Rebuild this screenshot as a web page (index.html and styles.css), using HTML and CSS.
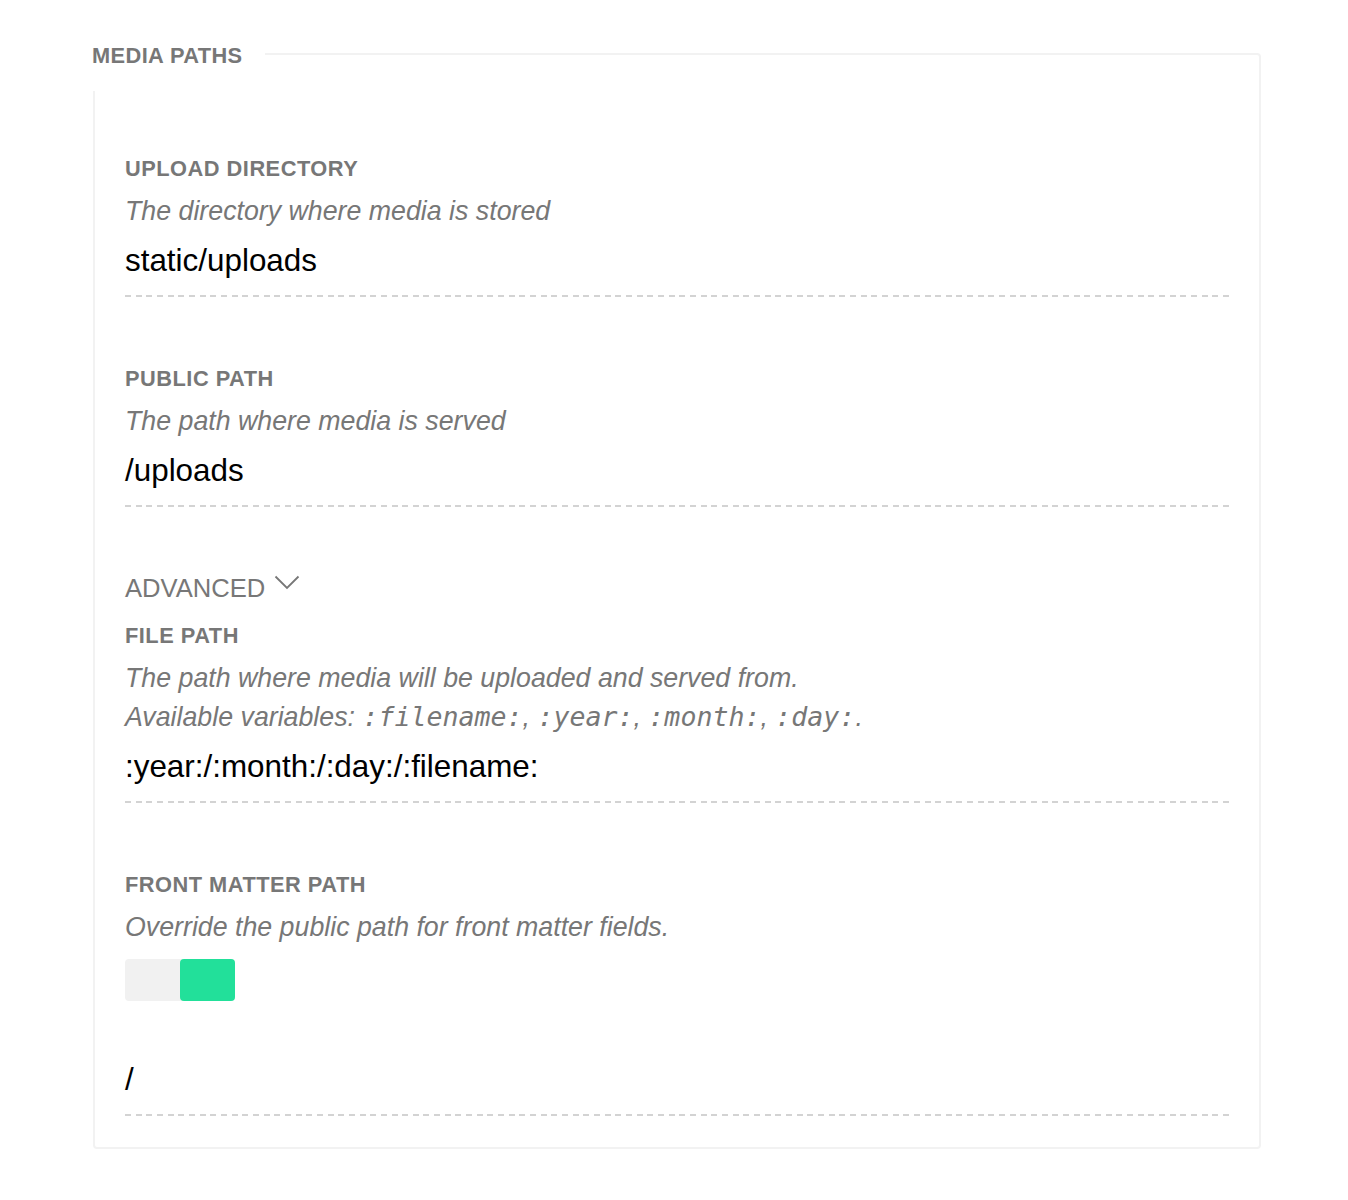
FILE: index.html
```html
<!DOCTYPE html>
<html lang="en">
<head>
<meta charset="utf-8">
<title>Media paths</title>
<link rel="stylesheet" href="styles.css">
</head>
<body>
<section class="panel">
  <h2 class="legend">MEDIA PATHS</h2>

  <div class="field">
    <div class="label">UPLOAD DIRECTORY</div>
    <div class="desc">The directory where media is stored</div>
    <div class="value">static/uploads</div>
    <div class="underline"></div>
  </div>

  <div class="field">
    <div class="label">PUBLIC PATH</div>
    <div class="desc">The path where media is served</div>
    <div class="value">/uploads</div>
    <div class="underline"></div>
  </div>

  <div class="advanced">
    <span>ADVANCED</span>
    <svg class="chevron" width="26" height="15" viewBox="0 0 26 15"><polyline points="1.5,1.5 13,13 24.5,1.5" fill="none" stroke="#777" stroke-width="1.8"/></svg>
  </div>

  <div class="field field-tight">
    <div class="label">FILE PATH</div>
    <div class="desc">The path where media will be uploaded and served from.<br>Available variables: <code>:filename:</code>, <code>:year:</code>, <code>:month:</code>, <code>:day:</code>.</div>
    <div class="value">:year:/:month:/:day:/:filename:</div>
    <div class="underline"></div>
  </div>

  <div class="field">
    <div class="label">FRONT MATTER PATH</div>
    <div class="desc">Override the public path for front matter fields.</div>
    <div class="toggle"><span class="toggle-track"></span><span class="toggle-knob"></span></div>
    <div class="value value-after-toggle">/</div>
    <div class="underline"></div>
  </div>
</section>
</body>
</html>
```

FILE: styles.css
```css
html, body {
  margin: 0;
  padding: 0;
  background: #ffffff;
}

body {
  font-family: "Liberation Sans", Arial, Helvetica, sans-serif;
  color: #000;
}

.panel {
  position: relative;
  box-sizing: border-box;
  width: 1168px;
  margin: 53px 0 0 93px;
  padding: 102px 30px 31px 30px;
  border: 2px solid #f2f2f2;
  border-radius: 4px;
}

.legend {
  position: absolute;
  top: -15px;
  left: -3px;
  height: 51px;
  box-sizing: border-box;
  margin: 0;
  padding: 3px 22px 0 0;
  background: #ffffff;
  font-size: 21.8px;
  line-height: 26px;
  font-weight: 700;
  letter-spacing: 0.4px;
  color: #777;
}

.field + .field {
  margin-top: 70px;
}

.field-tight {
  margin-top: 21px;
}

.label {
  font-size: 21.8px;
  line-height: 24px;
  font-weight: 700;
  letter-spacing: 0.5px;
  color: #777;
}

.desc {
  margin-top: 11px;
  font-size: 26.75px;
  line-height: 39px;
  font-style: italic;
  color: #777;
}

.desc code {
  font-family: "DejaVu Sans Mono", "Liberation Mono", monospace;
  font-style: oblique;
  font-size: 26.6px;
  line-height: 1;
}

.value {
  margin-top: 10px;
  font-size: 31.4px;
  line-height: 40px;
  color: #000;
}

.value-after-toggle {
  margin-top: 59px;
}

.underline {
  margin-top: 14px;
  height: 2px;
  background: repeating-linear-gradient(90deg, #d3d3d3 0 6px, transparent 6px 10.66px);
}

.advanced {
  margin-top: 66px;
  display: flex;
  align-items: center;
  gap: 9px;
  font-size: 25.6px;
  line-height: 30px;
  color: #777;
}

.chevron {
  display: block;
  margin-top: -12px;
}

.toggle {
  margin-top: 12px;
  display: flex;
  width: 110px;
  height: 42px;
  border-radius: 4px;
  background: #f1f1f1;
}

.toggle-track {
  flex: 1;
}

.toggle-knob {
  width: 55px;
  height: 42px;
  border-radius: 4px;
  background: #22e09a;
}
```
